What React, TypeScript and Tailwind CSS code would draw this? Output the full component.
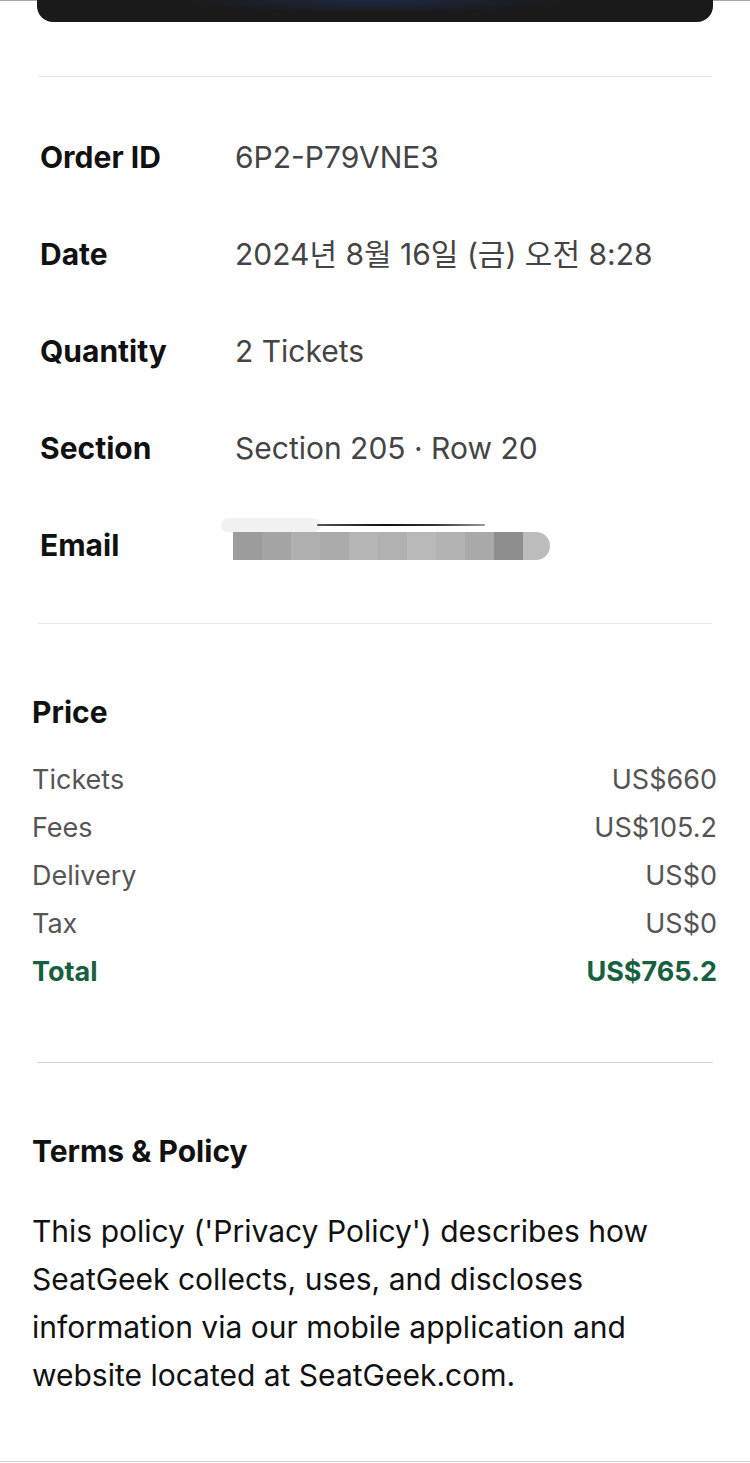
const font = { fontFamily: 'Inter, "Noto Sans CJK KR", sans-serif' };

const details = [
  { label: 'Order ID', value: '6P2-P79VNE3' },
  { label: 'Date', value: '2024년 8월 16일 (금) 오전 8:28' },
  { label: 'Quantity', value: '2 Tickets' },
  { label: 'Section', value: 'Section 205 · Row 20' },
];

const prices = [
  { label: 'Tickets', value: 'US$660' },
  { label: 'Fees', value: 'US$105.2' },
  { label: 'Delivery', value: 'US$0' },
  { label: 'Tax', value: 'US$0' },
];

const blurShades = ['#9c9c9c', '#a4a4a4', '#afafaf', '#aaaaaa', '#b5b5b5', '#b1b1b1', '#b9b9b9', '#b3b3b3', '#a9a9a9', '#8e8e8e'];

const BlurredEmail = () => (
  <div className="relative flex h-[28px] items-stretch">
    <div className="absolute left-[-12px] top-[-14px] h-[14px] w-[100px] rounded-full bg-[#f1f1f1]" />
    <div className="absolute left-[84px] top-[-8px] h-[2px] w-[168px] rounded-full bg-[linear-gradient(90deg,#555,#111_40%,#333_70%,#999)]" />
    {blurShades.map((c, i) => (
      <div key={i} className="w-[29px]" style={{ backgroundColor: c }} />
    ))}
    <div className="w-[27px] rounded-r-full bg-[#bcbcbc]" />
  </div>
);

export default function App() {
  return (
    <div className="relative h-[1463px] w-[750px] overflow-hidden bg-white text-[#111]" style={font}>
      <div className="h-px w-full bg-[#a8a8a8]" />
      <div className="mx-[37px] -mt-px h-[22px] rounded-b-[16px] bg-[#1a1a1a] bg-[radial-gradient(ellipse_at_top,#1d2a45_0%,#1a1a1a_40%)]" />

      <div className="mx-[38px] mt-[54px] h-px bg-[#e4e4e4]" />

      <div className="mt-[32px]">
        {details.map((d) => (
          <div key={d.label} className="flex h-[97px] items-center">
            <div className="w-[235px] pl-[40px] text-[30px] font-bold text-[#111]">{d.label}</div>
            <div className="text-[30px] text-[#444]">{d.value}</div>
          </div>
        ))}
        <div className="flex h-[97px] items-center">
          <div className="w-[233px] pl-[40px] text-[30px] font-bold text-[#111]">Email</div>
          <BlurredEmail />
        </div>
      </div>

      <div className="mx-[38px] mt-[29px] h-px bg-[#e8e8e8]" />

      <div className="px-[32px] pt-[70px]">
        <div className="h-[36px] text-[30px] font-bold leading-[36px]">Price</div>
        <div className="mt-[26px]">
          {prices.map((p) => (
            <div key={p.label} className="flex h-[48px] items-center justify-between pr-[1px] text-[27px] text-[#555]">
              <span>{p.label}</span>
              <span>{p.value}</span>
            </div>
          ))}
          <div className="flex h-[48px] items-center justify-between pr-[1px] text-[27px] font-bold text-[#17603f]">
            <span>Total</span>
            <span>US$765.2</span>
          </div>
        </div>
      </div>

      <div className="mx-[37px] mt-[66px] h-px bg-[#d6d6d6]" />

      <div className="px-[32px] pt-[70px]">
        <div className="h-[36px] text-[30px] font-bold leading-[36px]">Terms &amp; Policy</div>
        <p className="mt-[38px] text-[30px] leading-[48px] text-[#111]">
          This policy ('Privacy Policy') describes how
          <br />
          SeatGeek collects, uses, and discloses
          <br />
          information via our mobile application and
          <br />
          website located at SeatGeek.com.
        </p>
      </div>

      <div className="absolute bottom-[1px] left-0 h-px w-full bg-[#cfcfcf]" />
    </div>
  );
}
